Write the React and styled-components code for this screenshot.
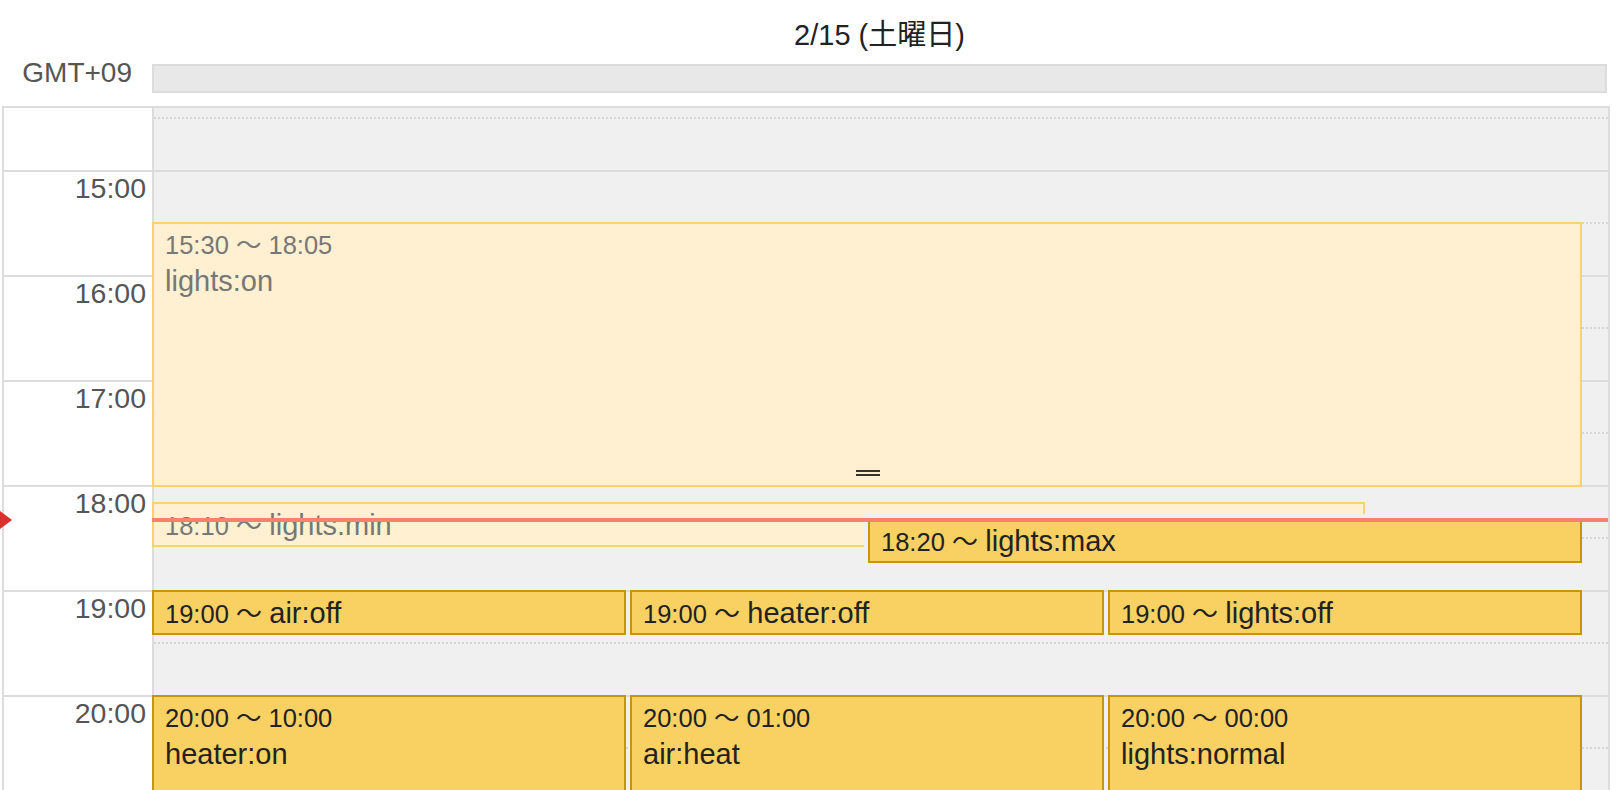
import React from "react";
import styled, { createGlobalStyle } from "styled-components";

const HOUR = 105;

const hours = [14, 15, 16, 17, 18, 19, 20];

const single = [
  { id: 1, time: "15:30 ～ 18:05", title: "lights:on", past: true, top: 157, height: 265, left: 0, right: 0, handle: true },
  { id: 2, time: "18:10", title: "lights:min", past: true, inline: true, top: 437, height: 45, left: 0, right: 217 },
  { id: 3, time: "18:20", title: "lights:max", inline: true, cut: true, top: 453, height: 45, left: 716, right: 0 },
];

const lanes = [
  {
    top: 525,
    height: 45,
    items: [
      { time: "19:00", title: "air:off", inline: true },
      { time: "19:00", title: "heater:off", inline: true },
      { time: "19:00", title: "lights:off", inline: true },
    ],
  },
  {
    top: 630,
    height: 220,
    items: [
      { time: "20:00 ～ 10:00", title: "heater:on" },
      { time: "20:00 ～ 01:00", title: "air:heat" },
      { time: "20:00 ～ 00:00", title: "lights:normal" },
    ],
  },
];

const NOW = 453;

function Event({ ev, style }) {
  return (
    <EventBox $past={ev.past} $cut={ev.cut} style={style}>
      {ev.inline ? (
        <Line>
          <Time>{ev.time}</Time> ～ <Title>{ev.title}</Title>
        </Line>
      ) : (
        <>
          <Time as="div">{ev.time}</Time>
          <Title as="div">{ev.title}</Title>
        </>
      )}
      {ev.handle && <Handle />}
    </EventBox>
  );
}

function App() {
  return (
    <Page>
      <GlobalStyle />
      <DateRow>
        <span />
        <DateLabel>2/15 (土曜日)</DateLabel>
      </DateRow>
      <AllDayRow>
        <Zone>GMT+09</Zone>
        <AllDayBar />
      </AllDayRow>
      <BodyWrap>
        <NowMarker style={{ top: 65 + NOW + 2 - 106 - 9 }} />
        <Body>
          <Scroll>
            {hours.map((h) => (
              <HourRow key={h}>
                <TimeCell>{h}:00</TimeCell>
                <DayCell />
              </HourRow>
            ))}
            <EventLayer>
              {single.map((ev) => (
                <Event
                  key={ev.id}
                  ev={ev}
                  style={{ position: "absolute", top: ev.top, height: ev.height, left: ev.left, right: ev.right }}
                />
              ))}
              {lanes.map((lane, i) => (
                <Lane key={i} style={{ top: lane.top, height: lane.height }}>
                  {lane.items.map((ev, j) => (
                    <Event key={j} ev={ev} />
                  ))}
                </Lane>
              ))}
            </EventLayer>
            <NowLine style={{ top: NOW }} />
          </Scroll>
        </Body>
      </BodyWrap>
    </Page>
  );
}

const GlobalStyle = createGlobalStyle`
  html, body {
    margin: 0;
    padding: 0;
    background: #fff;
    overflow: hidden;
  }
  body {
    font-family: "Liberation Sans", Arial, "Noto Sans CJK JP", sans-serif;
  }
`;

const Page = styled.div`
  width: 1620px;
  height: 790px;
  overflow: hidden;
  position: relative;
`;

const DateRow = styled.div`
  display: grid;
  grid-template-columns: 152px 1455px;
  padding-top: 19px;
  height: 32px;
`;

const DateLabel = styled.div`
  text-align: center;
  font-size: 29px;
  line-height: 32px;
  color: #222;
`;

const AllDayRow = styled.div`
  display: grid;
  grid-template-columns: 152px 1455px;
  align-items: start;
  margin-top: 6px;
`;

const Zone = styled.div`
  text-align: right;
  padding-right: 20px;
  font-size: 28px;
  line-height: 34px;
  margin-top: -1px;
  color: #555;
  white-space: nowrap;
`;

const AllDayBar = styled.div`
  margin-top: 7px;
  height: 29px;
  box-sizing: border-box;
  background: #e8e8e8;
  border: 2px solid #dcdcdc;
`;

const BodyWrap = styled.div`
  position: relative;
  margin-top: 13px;
`;

const NowMarker = styled.div`
  position: absolute;
  left: 0;
  width: 0;
  height: 0;
  border-left: 12px solid #d9302c;
  border-top: 9px solid transparent;
  border-bottom: 9px solid transparent;
  z-index: 5;
`;

const Body = styled.div`
  margin-left: 2px;
  width: 1608px;
  height: 684px;
  box-sizing: border-box;
  border: 2px solid #dcdcdc;
  border-bottom: none;
  overflow: hidden;
`;

const Scroll = styled.div`
  position: relative;
  margin-top: -43px;
`;

const HourRow = styled.div`
  display: grid;
  grid-template-columns: 150px 1fr;
  height: ${HOUR}px;
  box-sizing: border-box;
  border-top: 2px solid #dcdcdc;
`;

const TimeCell = styled.div`
  background: #fff;
  border-right: 2px solid #dcdcdc;
  text-align: right;
  padding-right: 6px;
  font-size: 28.5px;
  line-height: 32px;
  color: #555;
`;

const DayCell = styled.div`
  position: relative;
  background: #f0f0f0;

  &::after {
    content: "";
    position: absolute;
    left: 0;
    right: 0;
    top: 50px;
    border-top: 2px dotted #d6d6d6;
  }
`;

const EventLayer = styled.div`
  position: absolute;
  top: 0;
  bottom: 0;
  left: 148px;
  right: 26px;
`;

const Lane = styled.div`
  position: absolute;
  left: 0;
  right: 0;
  display: grid;
  grid-template-columns: repeat(3, 1fr);
  gap: 4px;
`;

const EventBox = styled.div`
  position: relative;
  box-sizing: border-box;
  overflow: hidden;
  padding: 4px 11px;
  border: 2px solid ${(p) => (p.$past ? "#f9d26e" : "#c4960a")};
  background: ${(p) => (p.$past ? "#fef0d0" : "#f9d163")};
  color: ${(p) => (p.$past ? "#777" : "#222")};
  white-space: nowrap;
  ${(p) =>
    p.$cut &&
    `
    overflow: visible;
    box-shadow: -4px -4px 0 #f0f0f0, 0 -4px 0 #f0f0f0, -4px 0 0 #f0f0f0;
  `}
`;

const Line = styled.div`
  font-size: 26px;
  line-height: 34px;
`;

const Time = styled.span`
  font-size: 25.5px;
  line-height: 34px;
`;

const Title = styled.span`
  font-size: 29px;
  line-height: 38px;

  ${Line} & {
    line-height: 34px;
  }
`;

const Handle = styled.div`
  position: absolute;
  left: 50%;
  bottom: 9px;
  width: 24px;
  height: 2px;
  margin-left: -11px;
  border-top: 2px solid #333;
  border-bottom: 2px solid #333;
`;

const NowLine = styled.div`
  position: absolute;
  left: 148px;
  right: 0;
  height: 4px;
  background: #f8806e;
  z-index: 4;
`;

export default App;
